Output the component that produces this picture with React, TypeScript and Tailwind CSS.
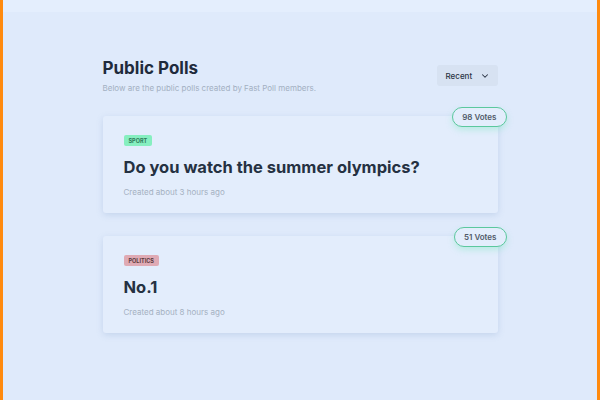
import { ChevronDown } from 'lucide-react'

const polls = [
  {
    tag: 'SPORT',
    tagClass: 'bg-[#86efc0] text-[#2f7a5a]',
    title: 'Do you watch the summer olympics?',
    created: 'Created about 3 hours ago',
    votes: 98,
  },
  {
    tag: 'POLITICS',
    tagClass: 'bg-[#dfaab4] text-[#5a3a40]',
    title: 'No.1',
    created: 'Created about 8 hours ago',
    votes: 51,
  },
]

const App = () => {
  return (
    <div className="min-h-[400px] w-[600px] bg-[#dfeafb] border-x-[3px] border-[#ff8a0e] font-['Inter',sans-serif]">
      {/* top strip */}
      <div className="h-[12px] bg-[#e4eefd]"></div>

      <div className="w-[395px] mx-auto pt-[45px]">
        {/* Header */}
        <div className="flex items-start justify-between">
          <div>
            <h1 className="text-[17px] leading-[22px] font-bold text-[#1f2b3c]">Public Polls</h1>
            <p className="mt-[4px] text-[8px] leading-[10px] text-[#a3b0c2]">
              Below are the public polls created by Fast Poll members.
            </p>
          </div>
          <button className="mt-[8px] w-[61px] h-[21px] rounded-[3px] bg-[#d7e2f2] flex items-center justify-between pl-[9px] pr-[8px] text-[8px] font-medium text-[#2a3444]">
            Recent
            <ChevronDown className="w-[10px] h-[10px]" strokeWidth={2.5} />
          </button>
        </div>

        {/* Polls */}
        <div className="mt-[23px] flex flex-col gap-[23px]">
          {polls.map((poll) => (
            <div
              key={poll.title}
              className="relative h-[97px] rounded-[3px] bg-[#e3edfc] shadow-[0_2px_6px_rgba(120,150,200,0.25)] px-[21px] pt-[19px] flex flex-col items-start"
            >
              <div className="absolute right-[-9px] top-[-9px] h-[20px] px-[9px] rounded-full border border-[#5cc89e] bg-[#e3edfc] shadow-[0_3px_6px_rgba(110,231,183,0.35)] flex items-center text-[8px] font-semibold text-[#4f5968]">
                {poll.votes} Votes
              </div>
              <span className={`flex items-center h-[11px] rounded-[2px] px-[5px] text-[5.5px] leading-[6px] font-bold ${poll.tagClass}`}>
                {poll.tag}
              </span>
              <h2 className="mt-[10px] text-[16.5px] leading-[22px] font-bold text-[#253142]">{poll.title}</h2>
              <p className="mt-[9px] text-[8px] leading-[10px] text-[#a5b1c2]">{poll.created}</p>
            </div>
          ))}
        </div>
      </div>
    </div>
  )
}

export default App
